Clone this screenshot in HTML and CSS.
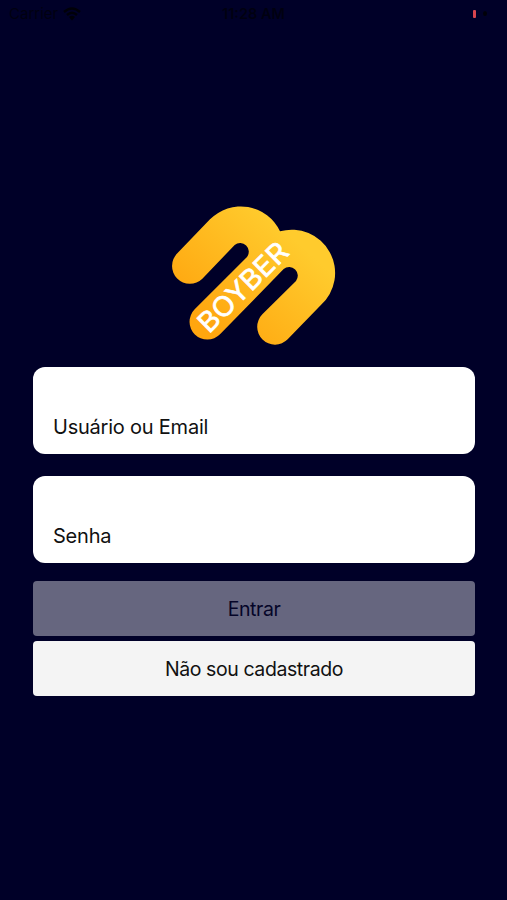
FILE: index.html
```html
<!DOCTYPE html>
<html lang="pt-br">
<head>
  <meta charset="UTF-8">
  <meta name="viewport" content="width=device-width, initial-scale=1.0">
  <title>Boyber</title>
  <link rel="stylesheet" href="styles.css">
</head>
<body>
  <div class="status-bar">
    <div class="carrier">
      <span>Carrier</span>
      <svg class="wifi" viewBox="0 0 18 14">
        <path d="M1 5 Q9 -2 17 5 M4 8 Q9 3.5 14 8" fill="none" stroke="#000008" stroke-width="2.4"/>
        <path d="M6 10 Q9 7.5 12 10 L9 13.5 Z" fill="#000008"/>
      </svg>
    </div>
    <div class="time">11:28 AM</div>
    <div class="battery">
      <span class="level"></span>
      <span class="tip"></span>
    </div>
  </div>

  <main class="login">
    <svg class="logo" viewBox="0 0 570 480">
      <defs>
        <linearGradient id="gold" gradientUnits="userSpaceOnUse" x1="150" y1="400" x2="400" y2="130">
          <stop offset="0" stop-color="#ffa60f"/>
          <stop offset="1" stop-color="#ffcb2d"/>
        </linearGradient>
      </defs>
      <path fill="url(#gold)" d="M127 251 L224 150 A26 26 0 0 1 261 186 L104 343 A53 53 0 0 0 180 418 L371 222 A26 26 0 0 1 408 258 L307 358 A53 53 0 0 0 383 433 L482 331 A130 130 0 0 0 360 109 A130 130 0 0 0 150 73 L52 175 A53 53 0 0 0 127 251 Z"/>
      <text class="logo-text" transform="translate(147 418) rotate(-44.8)" textLength="344" lengthAdjust="spacingAndGlyphs">BOYBER</text>
    </svg>

    <form class="form">
      <input class="field" type="text" placeholder="Usuário ou Email">
      <input class="field" type="password" placeholder="Senha">
      <button class="button" type="submit" disabled>Entrar</button>
      <button class="button" type="button">Não sou cadastrado</button>
    </form>
  </main>
</body>
</html>
```

FILE: styles.css
```css
* {
  box-sizing: border-box;
}
body {
  margin: 0;
  height: 100vh;
  background-color: #000028;
  font-family: Inter, "Liberation Sans", sans-serif;
  overflow: hidden;
}
.status-bar {
  display: grid;
  grid-template-columns: 1fr auto 1fr;
  align-items: center;
  height: 27px;
  padding: 0 9px;
  color: #000010;
  font-size: 15px;
}
.carrier {
  display: flex;
  align-items: center;
  gap: 5px;
}
.wifi {
  width: 18px;
  height: 14px;
}
.time {
  font-weight: 600;
  font-size: 14.5px;
}
.battery {
  display: flex;
  align-items: center;
  justify-content: flex-end;
  gap: 7px;
}
.level {
  width: 3px;
  height: 8px;
  background-color: #d8454f;
  border-radius: 1px;
}
.tip {
  width: 4px;
  height: 5px;
  margin-right: 11px;
  background-color: #000008;
  border-radius: 50%;
}
.login {
  padding: 168px 32px 0 33px;
}
.logo {
  display: block;
  width: 190px;
  height: 160px;
  margin: 0 auto 12px 127px;
}
.logo-text {
  fill: #fff;
  stroke: #fff;
  stroke-width: 2px;
  font-family: Inter, sans-serif;
  font-size: 82px;
}
.form {
  display: flex;
  flex-direction: column;
}
.field {
  width: 100%;
  height: 87px;
  margin-bottom: 22px;
  padding: 33px 20px 0;
  border: none;
  border-radius: 12px;
  background-color: #fff;
  font-family: inherit;
  font-size: 20px;
  letter-spacing: -0.22px;
}
.field[type="password"] {
  margin-bottom: 18px;
}
.field::placeholder {
  color: #111;
  opacity: 1;
}
.button {
  height: 55px;
  margin-bottom: 5px;
  border: none;
  border-radius: 4px;
  background-color: #f4f4f4;
  color: #111;
  font-family: inherit;
  font-size: 19.5px;
  letter-spacing: -0.42px;
}
.button:disabled {
  background-color: #66667f;
  color: #050528;
}
```
